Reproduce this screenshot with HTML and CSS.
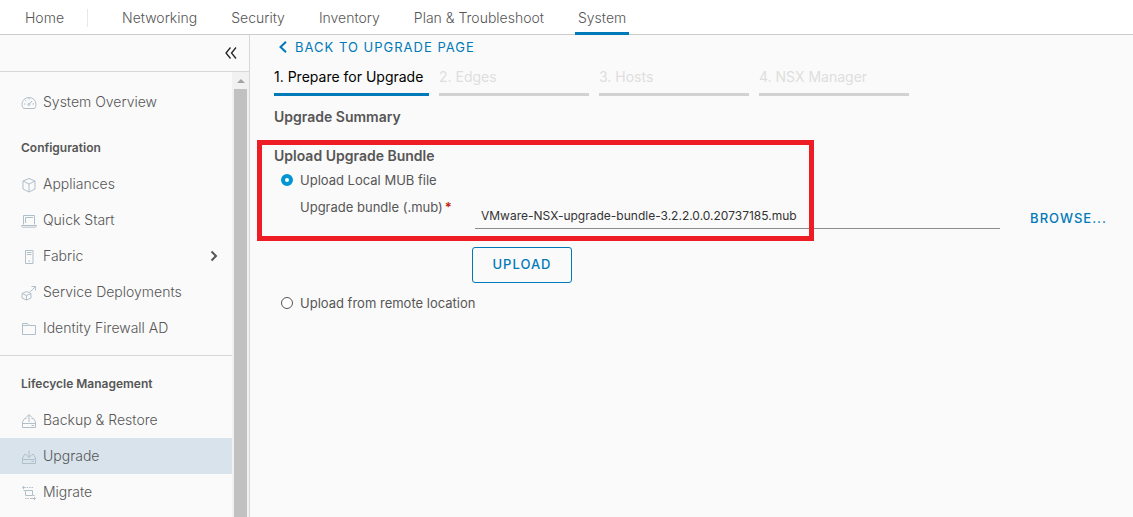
FILE: index.html
```html
<!DOCTYPE html>
<html lang="en">
<head>
<meta charset="utf-8">
<meta name="viewport" content="width=device-width, initial-scale=1">
<title>Upgrade</title>
<link rel="stylesheet" href="styles.css">
</head>
<body>
<div class="app">
  <nav class="topnav" aria-label="Main">
    <a class="topnav-link home" href="#">Home</a>
    <a class="topnav-link" href="#">Networking</a>
    <a class="topnav-link" href="#">Security</a>
    <a class="topnav-link" href="#">Inventory</a>
    <a class="topnav-link" href="#">Plan &amp; Troubleshoot</a>
    <a class="topnav-link active" href="#" aria-current="page">System</a>
  </nav>
  <div class="body">
    <aside class="sidebar">
      <div class="sidebar-head">
        <button class="collapse" type="button" aria-label="Collapse sidebar">
          <svg width="12" height="12" viewBox="0 0 12 12"><path d="M5.500 .5L1 6l4.500 5.500M11 .5L6.500 6l4.500 5.500"/></svg>
        </button>
      </div>
      <div class="sidebar-body">
        <nav class="menu" aria-label="System">
          <a class="item" href="#"><svg class="icon" viewBox="0 0 16 16"><path d="M2.500 13.500h11q1.500-1.600 1.500-4.300a7 6.700 0 0 0-14 0q0 2.700 1.500 4.300zM8 9.500L11 6M8 3v1.500M3 9h1.500M11.500 9H13M4.300 5.300l1 1"/><circle cx="7.800" cy="9.500" r="1"/></svg>System Overview</a>
          <h2 class="group">Configuration</h2>
          <a class="item" href="#"><svg class="icon" viewBox="0 0 16 16"><path d="M8 1.500l6 2.500v8l-6 3-6-3V4zM2 4l6 3 6-3M8 7v8"/></svg>Appliances</a>
          <a class="item" href="#"><svg class="icon" viewBox="0 0 16 16"><path d="M2.500 11.500v-9h11v9M4.500 10V4.500H12M.5 12.500h15v.8l-1 .9h-13l-1-.9z"/></svg>Quick Start</a>
          <a class="item" href="#"><svg class="icon" viewBox="0 0 16 16"><path d="M4.500 1.500h7.500v13H4.500zM6 3.500h4.500M6 5.500h4.500M7.200 12h2"/></svg>Fabric
            <svg class="chevron" viewBox="0 0 8 12"><path d="M1.500 1.500L6 6l-4.500 4.500"/></svg></a>
          <a class="item" href="#"><svg class="icon" viewBox="0 0 16 16"><path d="M5.500 6.500l4.500 2v4.500l-4.500 2-4.500-2V8.500zM1 8.500l4.500 2 4.500-2M5.500 10.500V15M9 7l5.500-5.500M10.500 1.500h4v4"/></svg>Service Deployments</a>
          <a class="item" href="#"><svg class="icon" viewBox="0 0 16 16"><path d="M1.500 13.500v-11h5l1.500 2h6.500v9zM1.500 4.500h6"/></svg>Identity Firewall AD</a>
          <h2 class="group ruled">Lifecycle Management</h2>
          <a class="item" href="#"><svg class="icon" viewBox="0 0 16 16"><path d="M5.500 5.500H3.500L1.500 9v5.500h13V9l-2-3.500h-2M1.500 10.500h13M8 9V2M5 4.500l3-3 3 3M10.500 12.500H13"/></svg>Backup &amp; Restore</a>
          <a class="item selected" href="#" aria-current="page"><svg class="icon" viewBox="0 0 16 16"><path d="M5 5.500H3.500L1.500 9v5.500h13V9l-2-3.500H11M1.500 10.500h13M8 1.500v7M5 5.500l3 3 3-3M10.500 12.500H13"/></svg>Upgrade</a>
          <a class="item" href="#"><svg class="icon" viewBox="0 0 16 16"><path d="M4.500 5.500h7v5h-7zM2 2.500h2.500M5.500 2.500H7M8 2.500h1.500M10.500 2.500H12M3 1L1.500 2.500 3 4M2.500 5.500h1.500M12 10.500h1.500M4 13.500h1.500M6.500 13.500H8M9 13.500h5M13 12l1.500 1.500L13 15"/></svg>Migrate</a>
        </nav>
        <div class="scroll-track" aria-hidden="true">
          <svg class="scroll-arrow" viewBox="0 0 8 4"><path d="M4 0l4 4H0z"/></svg>
          <div class="scroll-thumb"></div>
        </div>
      </div>
    </aside>
    <main class="content">
      <a class="back" href="#"><svg width="8" height="12" viewBox="0 0 8 12"><path d="M7 .8L1.500 6 7 11.200"/></svg>BACK TO UPGRADE PAGE</a>
      <ol class="steps">
        <li class="step current">1. Prepare for Upgrade</li>
        <li class="step">2. Edges</li>
        <li class="step">3. Hosts</li>
        <li class="step">4. NSX Manager</li>
      </ol>
      <h1 class="title">Upgrade Summary</h1>
      <form class="upload">
        <div class="highlight"></div>
        <h2 class="title">Upload Upgrade Bundle</h2>
        <label class="choice"><input type="radio" name="source" checked>Upload Local MUB file</label>
        <div class="file-row">
          <label class="file-label" for="bundle">Upgrade bundle (.mub)<span class="required">*</span></label>
          <input class="file-input" id="bundle" type="text" value="VMware-NSX-upgrade-bundle-3.2.2.0.0.20737185.mub">
          <button class="browse" type="button">BROWSE...</button>
        </div>
        <button class="submit" type="button">UPLOAD</button>
        <label class="choice"><input type="radio" name="source">Upload from remote location</label>
      </form>
    </main>
  </div>
</div>
</body>
</html>
```
FILE: styles.css
```css
* { box-sizing: border-box; }
body {
  margin: 0;
  background: #fafafa;
  color: #565656;
  font: 14px/20px Inter, "Open Sans", sans-serif;
}
a { color: inherit; text-decoration: none; }
button { font: inherit; background: none; border: 0; padding: 0; cursor: pointer; }
svg { fill: none; stroke: currentColor; flex: none; }
.app { height: 100vh; display: flex; flex-direction: column; overflow: hidden; }

.topnav {
  display: flex;
  gap: 28px;
  padding-left: 22px;
  background: #fff;
  border-bottom: 1px solid #ccc;
}
.topnav-link { padding: 8px 3px 7px; margin-bottom: -1px; line-height: 20px; }
.topnav-link.active { padding-bottom: 4px; border-bottom: 3px solid #0079b8; }
.topnav-link.home {
  padding-right: 24px;
  margin-right: 3px;
  background: linear-gradient(#e8e8e8, #e8e8e8) right 9px / 1px 18px no-repeat;
}

.body { flex: 1; min-height: 0; display: flex; }
.sidebar {
  width: 250px;
  flex: none;
  display: flex;
  flex-direction: column;
  border-right: 1px solid #d7d7d7;
}
.sidebar-head {
  height: 37px;
  display: flex;
  align-items: center;
  justify-content: flex-end;
  padding-right: 12px;
  border-bottom: 1px solid #d7d7d7;
}
.collapse { display: flex; color: #222; stroke-width: 1.3; }
.sidebar-body { flex: 1; min-height: 0; display: flex; }
.menu { flex: 1; padding-top: 12px; overflow: hidden; }
.item {
  height: 36px;
  display: flex;
  align-items: center;
  gap: 6px;
  padding: 0 14px 0 21px;
}
.topnav-link, .item { font-weight: 300; }
.item.selected { background: #d9e3eb; }
.icon { width: 16px; height: 16px; color: #b1bfc9; margin-top: 2px; }
.chevron { width: 8px; height: 12px; margin-left: auto; stroke-width: 2; }
.group {
  margin: 10px 0 0;
  padding: 0 21px;
  font-size: 12px;
  line-height: 36px;
  font-weight: 600;
}
.group.ruled { margin-top: 9px; padding-top: 10px; border-top: 1px solid #d7d7d7; }
.scroll-track {
  width: 17px;
  display: flex;
  flex-direction: column;
  align-items: center;
  background: #f1f1f1;
}
.scroll-arrow { width: 8px; height: 4px; margin: 7px 0 6px; fill: #a3a3a3; stroke: none; }
.scroll-thumb { width: 13px; flex: 1; background: #c1c1c1; }

.content { flex: 1; min-width: 0; padding: 2px 0 0 24px; }
.back {
  display: flex;
  align-items: center;
  gap: 8px;
  padding-left: 5px;
  color: #0079b8;
  font-size: 13px;
  letter-spacing: 1px;
}
.back svg { stroke-width: 2; }
.steps { display: flex; gap: 10px; margin: 0; padding: 10px 0 0; list-style: none; }
.step {
  width: 150px;
  padding-bottom: 6px;
  border-bottom: 3px solid #d2d2d2;
  color: #dedede;
  white-space: nowrap;
}
.step.current { width: 155px; color: #000; border-color: #0079b8; }
.title { margin: 0; font-size: 14px; line-height: 20px; font-weight: 600; }
h1.title { margin-top: 11px; }
.upload { position: relative; margin-top: 19px; }
.highlight {
  position: absolute;
  top: -6px;
  left: -17px;
  width: 557px;
  height: 101px;
  border: 5px solid #ee1c24;
  pointer-events: none;
}
.choice { display: flex; align-items: center; gap: 7px; margin-top: 4px; padding-left: 7px; font-size: 13px; }
.choice input {
  appearance: none;
  width: 12px;
  height: 12px;
  margin: 0;
  border: 1px solid #565656;
  border-radius: 50%;
  background: #fff;
}
.choice input:checked { border: 4px solid #0095d3; }
.file-row {
  display: grid;
  grid-template-columns: 175px 1fr auto;
  align-items: start;
  padding: 7px 26px 0 26px;
}
.file-label { font-size: 13px; }
.required { color: #c21d00; font-weight: 600; padding-left: 2px; }
.file-input {
  width: 100%;
  height: 25px;
  margin-top: 7px;
  padding: 0 6px 2px;
  border: 0;
  border-bottom: 1px solid #8c8c8c;
  background: none;
  color: #333;
  font: 12px/20px Inter, "Open Sans", sans-serif;
}
.browse, .submit { color: #0079b8; font-size: 13px; font-weight: 500; letter-spacing: 1px; line-height: 20px; }
.browse { margin: 11px 0 0 30px; }
.submit {
  display: block;
  width: 100px;
  height: 36px;
  margin: 18px 0 10px 198px;
  padding-bottom: 2px;
  border: 1px solid #0079b8;
  border-radius: 3px;
}
```
